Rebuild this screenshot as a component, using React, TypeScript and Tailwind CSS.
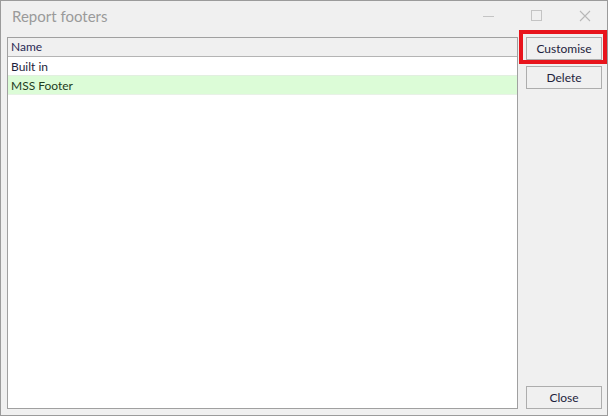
import React from "react";

export default function App() {
  const font = { fontFamily: 'Lato, "Noto Sans", sans-serif' };
  return (
    <div className="w-[608px] h-[416px] bg-[#f0f0f0] border border-[#9b9b9b] flex flex-col relative" style={font}>
      <div className="h-[36px] flex items-start shrink-0 relative">
        <div className="pl-[11px] pt-[5px] text-[15px] leading-[20px] text-[#9a9a9a]">Report footers</div>
        <div className="absolute left-[482px] top-[15px] w-[11px] h-[1px] bg-[#c4c4c4]" />
        <div className="absolute left-[530px] top-[9px] w-[11px] h-[11px] border border-[#c4c4c4]" />
        <svg className="absolute left-[578px] top-[9px]" width="12" height="12" viewBox="0 0 12 12">
          <path d="M1 1 L11 11 M11 1 L1 11" stroke="#b8b8b8" strokeWidth="1.1" fill="none" />
        </svg>
      </div>
      <div className="flex flex-1 pl-[6px] pr-[5px] pb-[6px] gap-[8px] min-h-0">
        <div className="w-[511px] h-full bg-white border border-[#a0a0a0] flex flex-col text-[12px] text-[#1e1e3c]">
          <div className="h-[19px] bg-[#f0f0f0] border-b border-[#b4b4b4] pl-[3px] leading-[18px] text-[#2a2a55]">Name</div>
          <div className="h-[19px] pl-[3px] leading-[19px] border-b border-[#e2efe0]">Built in</div>
          <div className="h-[19px] pl-[3px] leading-[19px] bg-[#dcfcd7] text-[#1e3c1e] border-b border-[#e8f2e6]">MSS Footer</div>
        </div>
        <div className="w-[76px] flex flex-col h-full text-[12px] text-[#1e1e3c]">
          <button className="h-[23px] w-[76px] border border-[#adadad] bg-[#f0f0f0] leading-[20px]">Customise</button>
          <button className="h-[23px] w-[76px] border border-[#adadad] bg-[#f0f0f0] leading-[20px] mt-[6px]">Delete</button>
          <div className="flex-1" />
          <button className="h-[23px] w-[76px] border border-[#adadad] bg-[#f0f0f0] leading-[20px]">Close</button>
        </div>
      </div>
      <div className="absolute left-[518px] top-[29px] w-[88px] h-[34px] border-[4px] border-[#e8141c] pointer-events-none" />
    </div>
  );
}
